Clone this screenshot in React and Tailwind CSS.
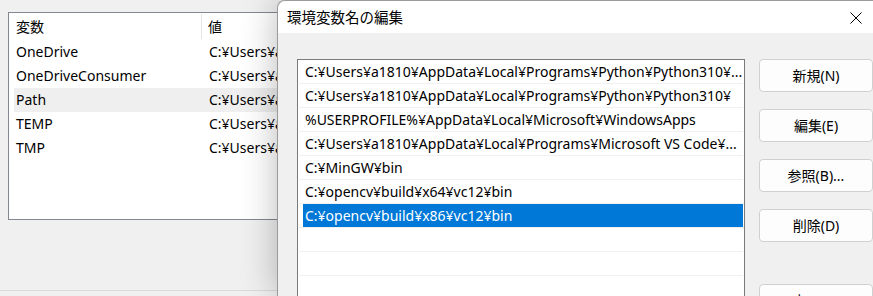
import React from "react";

const leftRows = [
  ["OneDrive", false],
  ["OneDriveConsumer", false],
  ["Path", true],
  ["TEMP", false],
  ["TMP", false],
];

const paths = [
  "C:¥Users¥a1810¥AppData¥Local¥Programs¥Python¥Python310¥...",
  "C:¥Users¥a1810¥AppData¥Local¥Programs¥Python¥Python310¥",
  "%USERPROFILE%¥AppData¥Local¥Microsoft¥WindowsApps",
  "C:¥Users¥a1810¥AppData¥Local¥Programs¥Microsoft VS Code¥...",
  "C:¥MinGW¥bin",
  "C:¥opencv¥build¥x64¥vc12¥bin",
  "C:¥opencv¥build¥x86¥vc12¥bin",
  "",
  "",
  "",
];

const buttons = ["新規(N)", "編集(E)", "参照(B)...", "削除(D)"];

export default function App() {
  return (
    <div className="w-[873px] h-[296px] flex overflow-hidden bg-[#f0f0f0] text-black text-[14px] leading-none [font-family:'Noto_Sans','Noto_Sans_CJK_JP',sans-serif]">
      {/* background window */}
      <div className="w-[277px] shrink-0 flex flex-col overflow-hidden">
        <div className="pt-[12px] pl-[8px]">
          <div className="w-[340px] h-[208px] bg-white border border-[#828790] flex flex-col">
            <div className="h-[27px] shrink-0 flex items-center ml-[5px]">
              <div className="w-[188px] shrink-0 pl-[2px] h-[25px] flex items-center border-r border-[#e5e5e5]">変数</div>
              <div className="pl-[6px]">値</div>
            </div>
            {leftRows.map(([name, sel]) => (
              <div key={name} className={`h-[24px] shrink-0 flex items-center ml-[5px] ${sel ? "bg-[#efefef]" : ""}`}>
                <div className="w-[195px] shrink-0 pl-[2px] whitespace-nowrap">{name}</div>
                <div className="whitespace-nowrap">C:¥Users¥a1810</div>
              </div>
            ))}
          </div>
        </div>
        <div className="mt-auto h-px bg-[#dadada]" />
        <div className="h-[5px]" />
      </div>

      {/* dialog */}
      <div className="flex-1 relative z-10 flex flex-col rounded-tl-[8px] border-l border-t border-[#9a9a9a] bg-[#f0f0f0] shadow-[0_0_36px_rgba(0,0,0,0.28)]">
        <div className="h-[32px] shrink-0 bg-white rounded-tl-[8px] flex items-center justify-between pl-[9px] pr-[10px]">
          <span className="text-[14.5px]">環境変数名の編集</span>
          <svg width="12" height="12" viewBox="0 0 12 12" className="mr-[1px] mt-[1px]">
            <path d="M0.5 0.5 L11.5 11.5 M11.5 0.5 L0.5 11.5" stroke="#000" strokeWidth="1" fill="none" />
          </svg>
        </div>
        <div className="flex pt-[26px] pl-[19px] gap-[14px]">
          <div className="w-[448px] h-[260px] shrink-0 bg-white border border-[#7a7a7a] pl-[1px] pr-px flex flex-col">
            {paths.map((p, i) => {
              const sel = i === 6;
              return (
                <div key={i} className="h-[24px] shrink-0 border-b border-[#f0f0f0] flex">
                  <div className={`flex-1 ml-[4px] flex items-center pl-[2px] whitespace-nowrap ${sel ? "bg-[#0078d7] text-white" : ""}`}>
                    {p}
                  </div>
                </div>
              );
            })}
          </div>
          <div className="w-[114px] shrink-0 flex flex-col">
            {buttons.map((b, i) => (
              <div key={b} className={`h-[33px] rounded-[4px] border border-[#d0d0d0] bg-[#fdfdfd] flex items-center justify-center ${i > 0 ? "mt-[17px]" : ""}`}>
                {b}
              </div>
            ))}
            <div className="h-[33px] mt-[42px] rounded-[4px] border border-[#d0d0d0] bg-[#fdfdfd] flex items-center justify-center">
              上へ(U)
            </div>
          </div>
        </div>
      </div>
    </div>
  );
}
